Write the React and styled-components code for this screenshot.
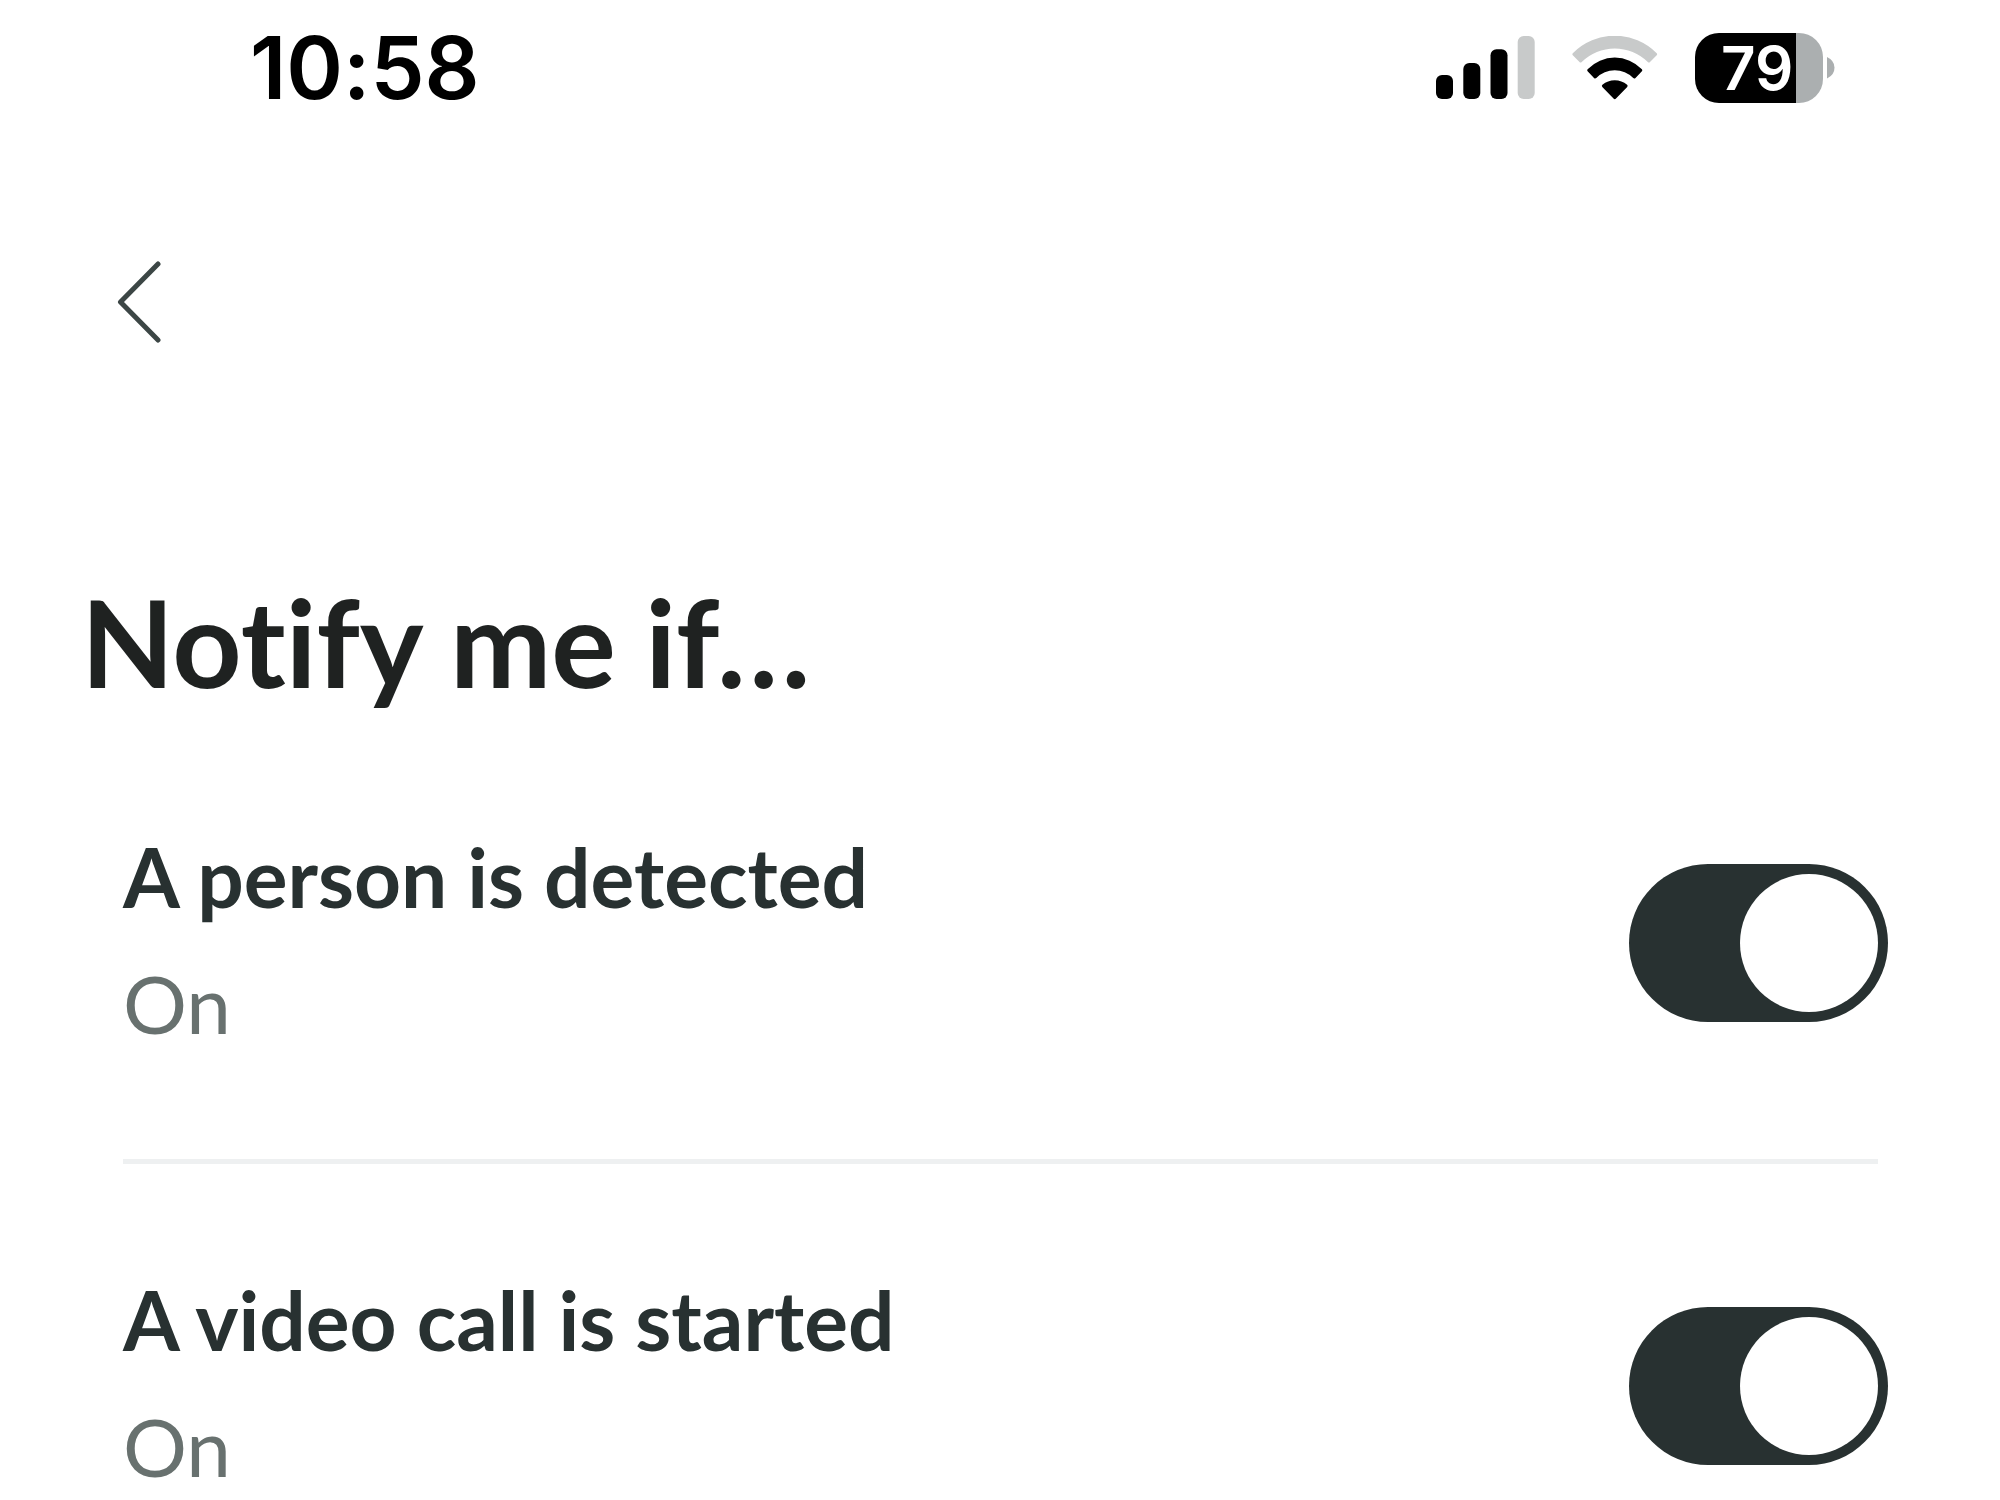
import { useState } from "react";
import styled, { createGlobalStyle, ThemeProvider } from "styled-components";

const theme = {
  colors: {
    background: "#ffffff",
    status: "#000000",
    batteryMuted: "#abafb0",
    title: "#1f2221",
    primary: "#283131",
    secondary: "#68716f",
    divider: "#eef0f1",
  },
};

const OPTIONS = [
  { id: "person", label: "A person is detected" },
  { id: "video-call", label: "A video call is started" },
];

const SignalIcon = () => (
  <svg width="99" height="64" viewBox="0 0 99 64" aria-hidden="true">
    <rect x="0" y="39" width="17" height="24" rx="6" />
    <rect x="27.3" y="27" width="17" height="36" rx="6" />
    <rect x="54.5" y="13.3" width="17" height="49.7" rx="6" />
    <rect x="81.7" y="0" width="17" height="63" rx="6" fill="#c8caca" />
  </svg>
);

const WifiIcon = () => (
  <svg width="86" height="64" viewBox="0 0 86 64" aria-hidden="true">
    <path
      fill="#c8caca"
      d="M.8 17.2A59 59 0 0 1 84.7 17.2Q85.6 18.2 84.7 19.2L78 26Q77 27 75.8 26A47 47 0 0 0 9.7 26Q8.5 27 7.5 26L.8 19.2Q-.1 18.2 .8 17.2Z"
    />
    <path d="M15.6 33.2A37.6 37.6 0 0 1 69.9 33.2Q70.8 34.2 69.9 35.2L63.5 41.9Q62.4 43 61.2 42A26 26 0 0 0 24.3 42Q23.1 43 22 41.9L15.6 35.2Q14.7 34.2 15.6 33.2Z" />
    <path d="M30.4 48.8A19 19 0 0 1 55.1 48.8Q56.2 49.8 55.2 50.9L44 62.5Q42.75 63.8 41.5 62.5L30.3 50.9Q29.3 49.8 30.4 48.8Z" />
  </svg>
);

const BatteryTip = () => (
  <svg width="8" height="22" viewBox="0 0 8 22" aria-hidden="true">
    <path fill="#abafb0" d="M0 0Q7.5 3.5 7.5 10.7T0 21.4Z" />
  </svg>
);

const ChevronIcon = () => (
  <svg width="44" height="84" viewBox="0 0 44 84" aria-hidden="true">
    <path
      d="M41 4L3.5 42L41 80"
      fill="none"
      stroke="#3c4645"
      strokeWidth="5"
      strokeLinecap="round"
      strokeLinejoin="round"
    />
  </svg>
);

const StatusBar = ({ time, battery }) => (
  <StatusContainer>
    <Time>{time}</Time>
    <StatusIcons>
      <SignalIcon />
      <WifiIcon />
      <Battery>
        <BatteryBody $level={battery}>{battery}</BatteryBody>
        <BatteryTip />
      </Battery>
    </StatusIcons>
  </StatusContainer>
);

const OptionRow = ({ id, label }) => {
  const [checked, setChecked] = useState(true);

  return (
    <Option>
      <OptionText>
        <OptionLabel htmlFor={id}>{label}</OptionLabel>
        <OptionState>{checked ? "On" : "Off"}</OptionState>
      </OptionText>
      <Switch
        id={id}
        type="checkbox"
        role="switch"
        checked={checked}
        onChange={(e) => setChecked(e.target.checked)}
      />
    </Option>
  );
};

export default function App() {
  return (
    <ThemeProvider theme={theme}>
      <GlobalStyle />
      <StatusBar time="10:58" battery={79} />
      <NavBar>
        <BackButton type="button" aria-label="Back">
          <ChevronIcon />
        </BackButton>
      </NavBar>
      <main>
        <Title>Notify me if…</Title>
        <OptionList>
          {OPTIONS.map((option) => (
            <OptionRow key={option.id} {...option} />
          ))}
        </OptionList>
      </main>
    </ThemeProvider>
  );
}

const GlobalStyle = createGlobalStyle`
  * {
    box-sizing: border-box;
  }
  body {
    margin: 0;
    background: ${({ theme }) => theme.colors.background};
    font-family: Lato, "Liberation Sans", sans-serif;
    font-variant-ligatures: none;
  }
  svg {
    display: block;
    flex: none;
  }
`;

const StatusContainer = styled.header`
  display: flex;
  align-items: center;
  justify-content: space-between;
  height: 136px;
  padding: 0 165px 0 250px;
  color: ${({ theme }) => theme.colors.status};
  font-family: Inter, "Liberation Sans", sans-serif;
  font-weight: 600;
`;

const Time = styled.time`
  font-size: 86px;
  line-height: 96px;
`;

const StatusIcons = styled.div`
  display: flex;
  align-items: center;
  gap: 37px;
`;

const Battery = styled.div`
  display: flex;
  align-items: center;
  gap: 4px;
`;

const BatteryBody = styled.div`
  width: 128px;
  height: 70px;
  padding-left: 26px;
  border-radius: 24px;
  color: ${({ theme }) => theme.colors.background};
  background: ${({ theme, $level }) =>
    `linear-gradient(to right, ${theme.colors.status} ${$level}%, ${theme.colors.batteryMuted} ${$level}%)`};
  font-size: 60px;
  line-height: 70px;
`;

const NavBar = styled.nav`
  display: flex;
  padding: 124px 117px 0;
`;

const BackButton = styled.button`
  padding: 0;
  border: 0;
  background: none;
  cursor: pointer;
`;

const Title = styled.h1`
  margin: 226px 81px 7px;
  color: ${({ theme }) => theme.colors.title};
  font-size: 121px;
  font-weight: 700;
  line-height: 144px;
`;

const OptionList = styled.ul`
  margin: 0;
  padding: 0 122px 0 123px;
  list-style: none;
`;

const Option = styled.li`
  display: flex;
  align-items: center;
  justify-content: space-between;
  padding: 107px 0 0;
  color: ${({ theme }) => theme.colors.primary};

  &:not(:last-child) {
    padding-bottom: 102px;
    border-bottom: 5px solid ${({ theme }) => theme.colors.divider};
  }
`;

const OptionText = styled.div`
  display: flex;
  flex-direction: column;
  gap: 25px;
`;

const OptionLabel = styled.label`
  font-size: 82px;
  font-weight: 700;
  line-height: 96px;
`;

const OptionState = styled.span`
  color: ${({ theme }) => theme.colors.secondary};
  font-size: 80px;
  line-height: 108px;
`;

/* The track reaches past the end of the divider line. */
const Switch = styled.input`
  display: flex;
  flex: none;
  width: 259px;
  height: 158px;
  margin: 0 -10px 0 0;
  padding: 10px;
  border-radius: 80px;
  appearance: none;
  background: ${({ theme }) => theme.colors.secondary};
  cursor: pointer;

  &::before {
    content: "";
    width: 138px;
    height: 138px;
    border-radius: 50%;
    background: ${({ theme }) => theme.colors.background};
  }
  &:checked {
    justify-content: flex-end;
    background: ${({ theme }) => theme.colors.primary};
  }
`;
